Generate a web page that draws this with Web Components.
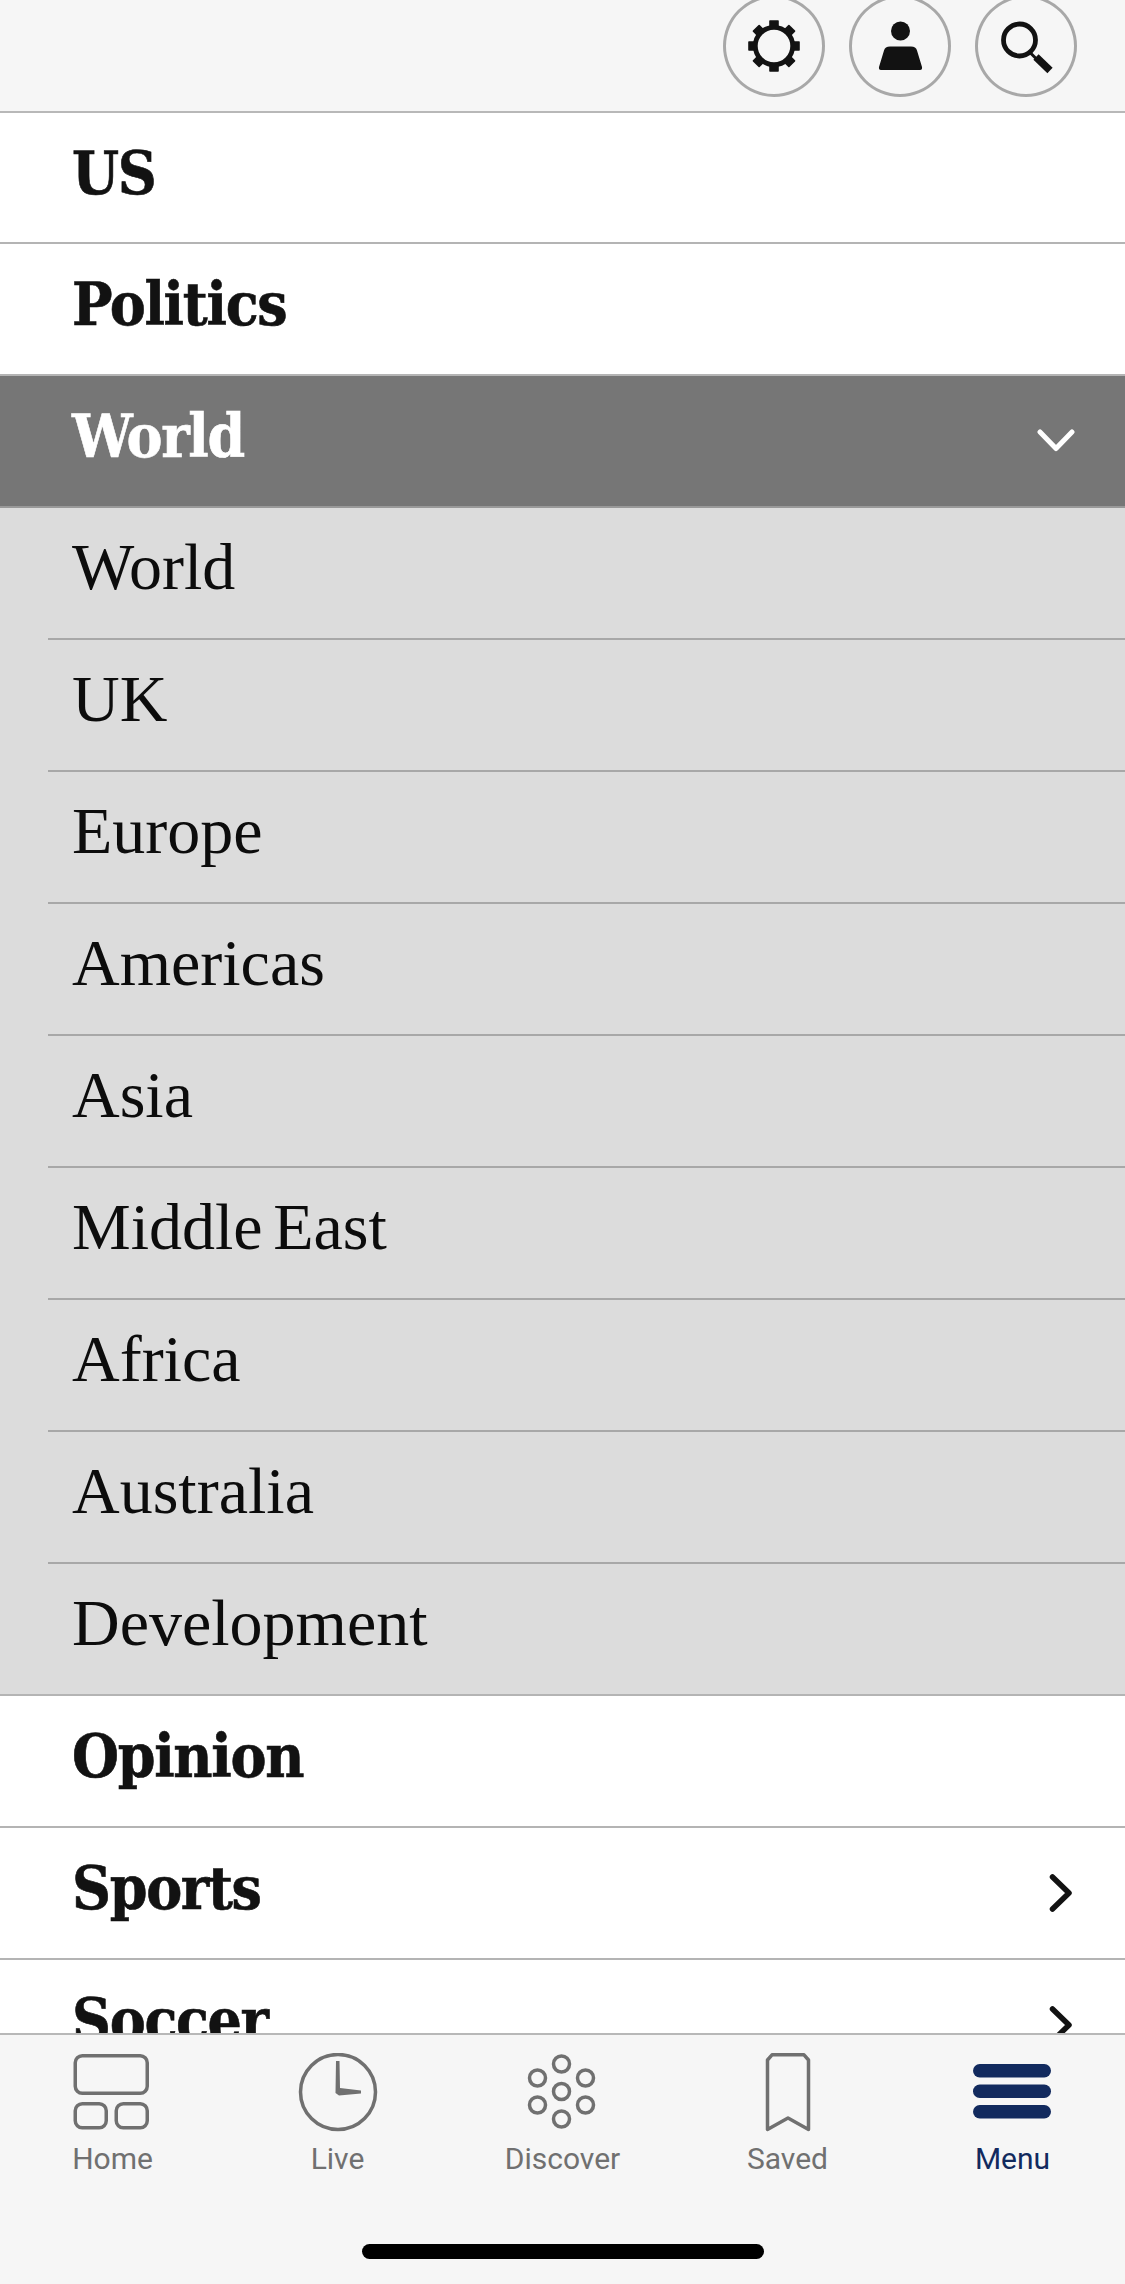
<!DOCTYPE html>
<html lang="en">
<head>
<meta charset="utf-8">
<title>Menu</title>
<style>
  html, body { margin: 0; height: 100%; background: #fff; }
</style>
</head>
<body>
<app-shell>
  <top-bar slot="top">
    <round-button>
      <svg viewBox="0 0 102 102" width="102" height="102">
        <circle cx="51" cy="51" r="18.700" fill="none" stroke="#121212" stroke-width="4.800"/>
        <g fill="#121212">
          <path d="M46.200 26 Q46.200 25.200 47 25.200 H55 Q55.800 25.200 55.800 26 V33 H46.200Z"/>
          <path transform="rotate(45 51 51)" d="M46.200 26 Q46.200 25.200 47 25.200 H55 Q55.800 25.200 55.800 26 V33 H46.200Z"/>
          <path transform="rotate(90 51 51)" d="M46.200 26 Q46.200 25.200 47 25.200 H55 Q55.800 25.200 55.800 26 V33 H46.200Z"/>
          <path transform="rotate(135 51 51)" d="M46.200 26 Q46.200 25.200 47 25.200 H55 Q55.800 25.200 55.800 26 V33 H46.200Z"/>
          <path transform="rotate(180 51 51)" d="M46.200 26 Q46.200 25.200 47 25.200 H55 Q55.800 25.200 55.800 26 V33 H46.200Z"/>
          <path transform="rotate(225 51 51)" d="M46.200 26 Q46.200 25.200 47 25.200 H55 Q55.800 25.200 55.800 26 V33 H46.200Z"/>
          <path transform="rotate(270 51 51)" d="M46.200 26 Q46.200 25.200 47 25.200 H55 Q55.800 25.200 55.800 26 V33 H46.200Z"/>
          <path transform="rotate(315 51 51)" d="M46.200 26 Q46.200 25.200 47 25.200 H55 Q55.800 25.200 55.800 26 V33 H46.200Z"/>
        </g>
      </svg>
    </round-button>
    <round-button>
      <svg viewBox="0 0 102 102" width="102" height="102" fill="#121212">
        <circle cx="51.500" cy="36" r="9.500"/>
        <path d="M41 51.500 H62 Q67 51.500 68 55.500 L73 72 Q73.500 75 71 75 H32 Q29.500 75 30 72 L35 55.500 Q36 51.500 41 51.500Z"/>
      </svg>
    </round-button>
    <round-button>
      <svg viewBox="0 0 102 102" width="102" height="102" fill="none" stroke="#121212">
        <circle cx="44.500" cy="45" r="16" stroke-width="4.800"/>
        <path d="M55 57.500 L61 63.500" stroke-width="3"/>
        <path d="M61 62 L75 75.500" stroke-width="7.500"/>
      </svg>
    </round-button>
  </top-bar>

  <menu-row>US</menu-row>
  <menu-row>Politics</menu-row>
  <menu-row active icon="down">World</menu-row>
  <menu-group>
    <sub-row>World</sub-row>
    <sub-row>UK</sub-row>
    <sub-row>Europe</sub-row>
    <sub-row>Americas</sub-row>
    <sub-row>Asia</sub-row>
    <sub-row>Middle East</sub-row>
    <sub-row>Africa</sub-row>
    <sub-row>Australia</sub-row>
    <sub-row>Development</sub-row>
  </menu-group>
  <menu-row>Opinion</menu-row>
  <menu-row icon="right">Sports</menu-row>
  <menu-row icon="right">Soccer</menu-row>

  <tab-bar slot="tabs">
    <tab-item label="Home">
      <svg viewBox="0 0 80 80" width="80" height="80" fill="none" stroke="#707070" stroke-width="3.500">
        <rect x="2.250" y="2.750" width="72" height="37.500" rx="7"/>
        <rect x="2.250" y="50.750" width="31" height="24" rx="7"/>
        <rect x="43.250" y="50.750" width="31" height="24" rx="7"/>
      </svg>
    </tab-item>
    <tab-item label="Live">
      <svg viewBox="0 0 80 80" width="80" height="80" fill="none">
        <circle cx="40" cy="39" r="37.500" stroke="#707070" stroke-width="3.500"/>
        <path d="M38 8 L41.500 8 L42 35 L63 37.500 L63 40.500 L41 42.500 L37.500 40 Z" fill="#707070"/>
      </svg>
    </tab-item>
    <tab-item label="Discover">
      <svg viewBox="0 0 80 80" width="80" height="80" fill="none" stroke="#707070" stroke-width="3.500">
        <circle cx="38.500" cy="11" r="8"/>
        <circle cx="14.500" cy="25" r="8"/>
        <circle cx="62.500" cy="25" r="8"/>
        <circle cx="38.500" cy="38.500" r="8"/>
        <circle cx="14.500" cy="52" r="8"/>
        <circle cx="62.500" cy="52" r="8"/>
        <circle cx="38.500" cy="66" r="8"/>
      </svg>
    </tab-item>
    <tab-item label="Saved">
      <svg viewBox="0 0 80 80" width="80" height="80" fill="none" stroke="#707070" stroke-width="3.500" stroke-linejoin="round">
        <path d="M19.500 7 L24 1.800 H56 L60.500 7 V76.500 L40 65 L19.500 76.500 Z"/>
      </svg>
    </tab-item>
    <tab-item label="Menu" current>
      <svg viewBox="0 0 80 80" width="80" height="80" fill="#122a5e">
        <rect x="0" y="11" width="78" height="13.500" rx="6.750"/>
        <rect x="0" y="31.500" width="78" height="13.500" rx="6.750"/>
        <rect x="0" y="52" width="78" height="13.500" rx="6.750"/>
      </svg>
    </tab-item>
  </tab-bar>
</app-shell>

<script>
const chevrons = {
  right: `<svg viewBox="0 0 24 38" width="24" height="38" fill="none" stroke="#121212" stroke-width="5.500" stroke-linecap="round" stroke-linejoin="round"><path d="M3.500 3 L20 19 L3.500 35"/></svg>`,
  down: `<svg viewBox="0 0 38 24" width="38" height="24" fill="none" stroke="#fff" stroke-width="5" stroke-linecap="round" stroke-linejoin="round"><path d="M3 3 L19 19.500 L35 3"/></svg>`
};

class AppShell extends HTMLElement {
  constructor() {
    super();
    this.attachShadow({ mode: "open" });
    this.shadowRoot.innerHTML = `
      <style>
        :host { display: flex; flex-direction: column; height: 100vh; overflow: hidden; }
        .list { flex: 1; min-height: 0; overflow: hidden; background: #fff; }
      </style>
      <slot name="top"></slot>
      <div class="list"><slot></slot></div>
      <slot name="tabs"></slot>
    `;
  }
}

class TopBar extends HTMLElement {
  constructor() {
    super();
    this.attachShadow({ mode: "open" });
    this.shadowRoot.innerHTML = `
      <style>
        :host {
          display: flex;
          justify-content: flex-end;
          align-items: flex-end;
          gap: 24px;
          box-sizing: border-box;
          height: 113px;
          padding: 0 48px 14px 0;
          background: #f6f6f6;
          border-bottom: 2px solid #b8b8b8;
          overflow: hidden;
          flex: none;
        }
      </style>
      <slot></slot>
    `;
  }
}

class RoundButton extends HTMLElement {
  constructor() {
    super();
    this.attachShadow({ mode: "open" });
    this.shadowRoot.innerHTML = `
      <style>
        :host {
          display: block;
          box-sizing: border-box;
          width: 102px;
          height: 102px;
          flex: none;
          border-radius: 50%;
          box-shadow: inset 0 0 0 3px #a8a8a8;
        }
        ::slotted(svg) { display: block; }
      </style>
      <slot></slot>
    `;
  }
}

class MenuRow extends HTMLElement {
  constructor() {
    super();
    this.attachShadow({ mode: "open" });
    const icon = chevrons[this.getAttribute("icon")] || "";
    this.shadowRoot.innerHTML = `
      <style>
        :host {
          display: flex;
          align-items: center;
          justify-content: space-between;
          box-sizing: border-box;
          height: 132px;
          padding: 0 52px 0 72px;
          background: #fff;
          color: #121212;
          border-bottom: 2px solid #b4b4b4;
          font: 700 60px/1 "DejaVu Serif Condensed", "DejaVu Serif", serif;
          letter-spacing: -1.300px;
          -webkit-text-stroke: 0.6px currentColor;
        }
        :host(:first-of-type) { height: 131px; }
        :host([active]) {
          background: #767676;
          color: #fff;
          border-bottom-color: #999;
          padding-right: 50px;
        }
        .label { position: relative; top: -5px; }
        svg { display: block; }
      </style>
      <span class="label"><slot></slot></span>
      ${icon}
    `;
  }
}

class MenuGroup extends HTMLElement {
  constructor() {
    super();
    this.attachShadow({ mode: "open" });
    this.shadowRoot.innerHTML = `
      <style>
        :host { display: block; background: #dcdcdc; }
      </style>
      <slot></slot>
    `;
  }
}

class SubRow extends HTMLElement {
  constructor() {
    super();
    this.attachShadow({ mode: "open" });
    this.shadowRoot.innerHTML = `
      <style>
        :host {
          display: flex;
          align-items: center;
          box-sizing: border-box;
          height: 132px;
          margin-left: 48px;
          padding-left: 24px;
          color: #0c0c0c;
          border-bottom: 2px solid #a8a8a8;
          font: 400 66px/1 "Liberation Serif", serif;
          word-spacing: -6px;
        }
        :host(:last-of-type) { margin-left: 0; padding-left: 72px; border-bottom-color: #b4b4b4; }
        .label { position: relative; top: -6px; }
      </style>
      <span class="label"><slot></slot></span>
    `;
  }
}

class TabBar extends HTMLElement {
  constructor() {
    super();
    this.attachShadow({ mode: "open" });
    this.shadowRoot.innerHTML = `
      <style>
        :host {
          display: block;
          box-sizing: border-box;
          height: 251px;
          flex: none;
          background: #f6f6f6;
          border-top: 2px solid #b8b8b8;
        }
        .tabs { display: grid; grid-template-columns: repeat(5, 1fr); padding-top: 18px; }
        .home-bar { width: 402px; height: 15px; margin: 67px auto 0; border-radius: 8px; background: #000; }
      </style>
      <div class="tabs"><slot></slot></div>
      <div class="home-bar"></div>
    `;
  }
}

class TabItem extends HTMLElement {
  constructor() {
    super();
    this.attachShadow({ mode: "open" });
    this.shadowRoot.innerHTML = `
      <style>
        :host {
          display: flex;
          flex-direction: column;
          align-items: center;
          color: #707070;
          font: 400 30px/36px Roboto, sans-serif;
        }
        :host([current]) { color: #122a5e; }
        ::slotted(svg) { display: block; }
        .label { margin-top: 8px; }
      </style>
      <slot></slot>
      <span class="label">${this.getAttribute("label")}</span>
    `;
  }
}

customElements.define("app-shell", AppShell);
customElements.define("top-bar", TopBar);
customElements.define("round-button", RoundButton);
customElements.define("menu-row", MenuRow);
customElements.define("menu-group", MenuGroup);
customElements.define("sub-row", SubRow);
customElements.define("tab-bar", TabBar);
customElements.define("tab-item", TabItem);
</script>
</body>
</html>
